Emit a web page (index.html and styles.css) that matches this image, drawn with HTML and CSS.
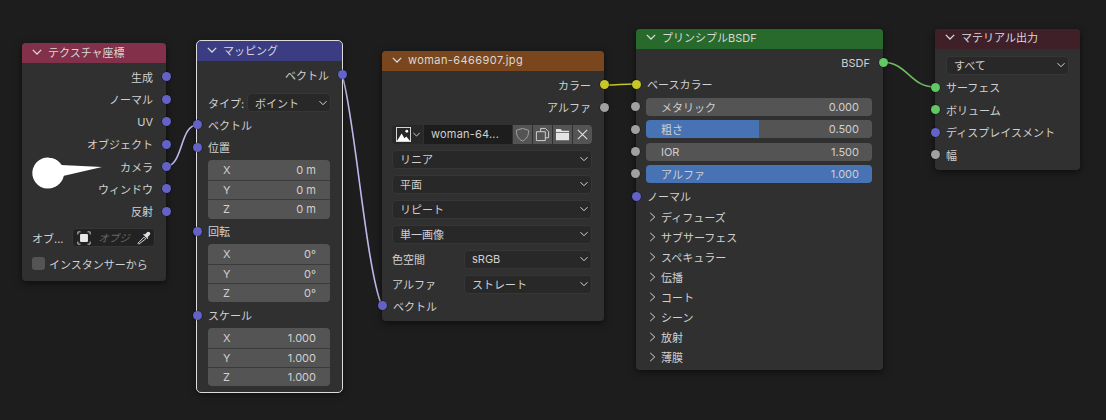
FILE: index.html
```html
<!DOCTYPE html>
<html lang="ja">
<head>
<meta charset="utf-8">
<title>Nodes</title>
<link rel="stylesheet" href="styles.css">
</head>
<body>
<svg class="defs" width="0" height="0">
  <symbol id="chev" viewBox="0 0 10 10"><path d="M1.500 3.200 5 6.700 8.500 3.200" fill="none" stroke="currentColor" stroke-width="1"/></symbol>
  <symbol id="right" viewBox="0 0 10 12"><path d="M2.500 1.500 7.500 6 2.500 10.500" fill="none" stroke="currentColor" stroke-width="1.100"/></symbol>
</svg>
<main class="canvas">
  <svg class="wires" width="1106" height="420" viewBox="0 0 1106 420">
    <path class="wire" d="M166 166.500C183 166 180 125 197 125"/>
    <path class="wire" d="M342 75C354 110 366 270 382 306"/>
    <path class="wire-y" d="M604 85C620 85 620 84 635 84"/>
    <path class="wire-g" d="M883 62C908 63 910 87 935 87"/>
  </svg>

  <section class="node n1">
    <header class="head h-tex"><svg class="hc"><use href="#chev"/></svg><span>テクスチャ座標</span></header>
    <div class="body">
      <div class="row out">生成<i class="sock out-s blue"></i></div>
      <div class="row out">ノーマル<i class="sock out-s blue"></i></div>
      <div class="row out">UV<i class="sock out-s blue"></i></div>
      <div class="row out">オブジェクト<i class="sock out-s blue"></i></div>
      <div class="row out">カメラ<i class="sock out-s blue"></i></div>
      <div class="row out">ウィンドウ<i class="sock out-s blue"></i></div>
      <div class="row out">反射<i class="sock out-s blue"></i></div>
      <div class="objrow">
        <span class="objlabel">オブ...</span>
        <div class="objfield">
          <svg class="objicon" viewBox="0 0 16 16"><path d="M1 4V1h3M12 1h3v3M15 12v3h-3M4 15H1v-3" fill="none" stroke="#d8d8d8" stroke-width="1"/><rect x="3.500" y="3.500" width="9" height="9" rx="1" fill="#e8e8e8"/></svg>
          <span class="objph">オブジ</span>
          <svg class="objicon" viewBox="0 0 16 16"><path d="M2 15l-1-1 7-7 2 2z" fill="none" stroke="#d8d8d8" stroke-width="1.100"/><path d="M7 4l5 5 1-1-1-1 2.500-2.500a1.800 1.800 0 0 0-3-3L9 4 8 3z" fill="#e0e0e0"/></svg>
        </div>
      </div>
      <div class="checkrow"><i class="check"></i>インスタンサーから</div>
    </div>
  </section>
  <svg class="comet" width="1106" height="420" viewBox="0 0 1106 420">
    <path d="M61 165L102 167 63 176a15.500 15.500 0 1 1-2-11z" fill="#fff"/>
    <circle cx="49" cy="173" r="15" fill="#fff"/>
  </svg>

  <section class="node n2">
    <header class="head h-map"><svg class="hc"><use href="#chev"/></svg><span>マッピング</span></header>
    <div class="body">
      <div class="row out">ベクトル<i class="sock out-s blue"></i></div>
      <div class="proprow type"><span class="plabel">タイプ:</span><div class="select"><span>ボイント</span><svg class="sc"><use href="#chev"/></svg></div></div>
      <div class="row in"><i class="sock in-s blue"></i>ベクトル</div>
      <div class="row in"><i class="sock in-s blue"></i>位置</div>
      <div class="vec">
        <div class="vrow"><span>X</span><span>0 m</span></div>
        <div class="vrow"><span>Y</span><span>0 m</span></div>
        <div class="vrow"><span>Z</span><span>0 m</span></div>
      </div>
      <div class="row in"><i class="sock in-s blue"></i>回転</div>
      <div class="vec">
        <div class="vrow"><span>X</span><span>0°</span></div>
        <div class="vrow"><span>Y</span><span>0°</span></div>
        <div class="vrow"><span>Z</span><span>0°</span></div>
      </div>
      <div class="row in"><i class="sock in-s blue"></i>スケール</div>
      <div class="vec">
        <div class="vrow"><span>X</span><span>1.000</span></div>
        <div class="vrow"><span>Y</span><span>1.000</span></div>
        <div class="vrow"><span>Z</span><span>1.000</span></div>
      </div>
    </div>
  </section>

  <section class="node n3">
    <header class="head h-img"><svg class="hc"><use href="#chev"/></svg><span class="latin">woman-6466907.jpg</span></header>
    <div class="body">
      <div class="row out">カラー<i class="sock out-s yellow"></i></div>
      <div class="row out">アルファ<i class="sock out-s gray"></i></div>
      <div class="imgrow">
        <div class="imgpick">
          <svg class="ico" viewBox="0 0 16 16"><rect x=".5" y=".5" width="15" height="15" fill="none" stroke="#e0e0e0"/><path d="M1 15l5-8 3 5 2-2 4 5z" fill="#fff"/><circle cx="11.500" cy="4.500" r="1.500" fill="#fff"/></svg>
          <svg class="mini"><use href="#chev"/></svg>
        </div>
        <div class="imgname">woman-64...</div>
        <div class="imgbtn"><svg class="ico" viewBox="0 0 16 16"><path d="M8 1.500 14.500 3.500C14.500 9 13 12.500 8 15 3 12.500 1.500 9 1.500 3.500z" fill="none" stroke="#a8a8a8"/></svg></div>
        <div class="imgbtn"><svg class="ico" viewBox="0 0 16 16"><path d="M6 1.500h5l3.500 3.500v6.500H11M6 1.500V5H1.500v9.500H11V5H6" fill="none" stroke="#d8d8d8"/></svg></div>
        <div class="imgbtn"><svg class="ico" viewBox="0 0 16 16"><path d="M1 2h5l1.500 2H15v1.500H1z" fill="#e4e4e4"/><path d="M1 6.500h14V14H1z" fill="#e4e4e4"/></svg></div>
        <div class="imgbtn"><svg class="ico" viewBox="0 0 16 16"><path d="M3 3l10 10M13 3 3 13" stroke="#e0e0e0" stroke-width="1.200"/></svg></div>
      </div>
      <div class="fullsel">
        <div class="select"><span>リニア</span><svg class="sc"><use href="#chev"/></svg></div>
      </div>
      <div class="fullsel"><div class="select"><span>平面</span><svg class="sc"><use href="#chev"/></svg></div></div>
      <div class="fullsel"><div class="select"><span>リピート</span><svg class="sc"><use href="#chev"/></svg></div></div>
      <div class="fullsel"><div class="select"><span>単一画像</span><svg class="sc"><use href="#chev"/></svg></div></div>
      <div class="proprow wide"><span class="plabel">色空間</span><div class="select"><span>sRGB</span><svg class="sc"><use href="#chev"/></svg></div></div>
      <div class="proprow wide"><span class="plabel">アルファ</span><div class="select"><span>ストレート</span><svg class="sc"><use href="#chev"/></svg></div></div>
      <div class="row in"><i class="sock in-s blue"></i>ベクトル</div>
    </div>
  </section>

  <section class="node n4">
    <header class="head h-sh"><svg class="hc"><use href="#chev"/></svg><span>プリンシプルBSDF</span></header>
    <div class="body">
      <div class="row out">BSDF<i class="sock out-s green"></i></div>
      <div class="row in"><i class="sock in-s yellow"></i>ベースカラー</div>
      <div class="slider"><i class="sock sl-s gray"></i><span>メタリック</span><span>0.000</span></div>
      <div class="slider half"><i class="sock sl-s gray"></i><span>粗さ</span><span>0.500</span></div>
      <div class="slider"><i class="sock sl-s gray"></i><span>IOR</span><span>1.500</span></div>
      <div class="slider full"><i class="sock sl-s gray"></i><span>アルファ</span><span>1.000</span></div>
      <div class="row in"><i class="sock in-s blue"></i>ノーマル</div>
      <div class="panel"><svg class="pc"><use href="#right"/></svg>ディフューズ</div>
      <div class="panel"><svg class="pc"><use href="#right"/></svg>サブサーフェス</div>
      <div class="panel"><svg class="pc"><use href="#right"/></svg>スペキュラー</div>
      <div class="panel"><svg class="pc"><use href="#right"/></svg>伝播</div>
      <div class="panel"><svg class="pc"><use href="#right"/></svg>コート</div>
      <div class="panel"><svg class="pc"><use href="#right"/></svg>シーン</div>
      <div class="panel"><svg class="pc"><use href="#right"/></svg>放射</div>
      <div class="panel"><svg class="pc"><use href="#right"/></svg>薄膜</div>
    </div>
  </section>

  <section class="node n5">
    <header class="head h-out"><svg class="hc"><use href="#chev"/></svg><span>マテリアル出力</span></header>
    <div class="body">
      <div class="fullsel first"><div class="select"><span>すべて</span><svg class="sc"><use href="#chev"/></svg></div></div>
      <div class="row in"><i class="sock in-s green"></i>サーフェス</div>
      <div class="row in"><i class="sock in-s green"></i>ボリューム</div>
      <div class="row in"><i class="sock in-s blue"></i>ディスプレイスメント</div>
      <div class="row in"><i class="sock in-s gray"></i>幅</div>
    </div>
  </section>
</main>
</body>
</html>
```
FILE: styles.css
```css
* { box-sizing: border-box; }
html, body { margin: 0; padding: 0; }
body {
  background: #1d1d1d;
  width: 1106px;
  height: 420px;
  overflow: hidden;
  font-family: Inter, "Noto Sans CJK JP", sans-serif;
  font-size: 11px;
  color: #d0d0d0;
}
.defs { position: absolute; }
.canvas { position: relative; width: 1106px; height: 420px; overflow: hidden; }
.wires, .comet { position: absolute; left: 0; top: 0; pointer-events: none; }
.comet { z-index: 5; }
.wire, .wire-y, .wire-g { fill: none; stroke-width: 1.6; }
.wire { stroke: #bdb8ea; }
.wire-y { stroke: #c4c42c; }
.wire-g { stroke: #6cbe5c; }

.node {
  position: absolute;
  background: #303030;
  border-radius: 4px;
  box-shadow: 0 2px 7px rgba(0,0,0,.55);
}
.n1 { left: 22px; top: 43px; width: 144px; height: 238px; }
.n2 { left: 197px; top: 41px; width: 145px; height: 351px; outline: 1px solid #dcdcdc; }
.n3 { left: 382px; top: 51px; width: 222px; height: 270px; }
.n4 { left: 636px; top: 29px; width: 247px; height: 341px; }
.n5 { left: 935px; top: 29px; width: 145px; height: 141px; }

.head {
  height: 20px;
  display: flex;
  align-items: center;
  padding: 0 0 3px 9px;
  border-radius: 4px 4px 0 0;
  color: #d8d8d8;
}
.n4 .head, .n5 .head { padding-bottom: 5px; }
.hc { width: 12px; height: 12px; margin-right: 5px; color: #dcdcdc; }
.latin { letter-spacing: .42px; }
.h-tex { background: #83314a; }
.h-map { background: #3c3c83; }
.h-img { background: #79461d; }
.h-sh { background: #28692c; }
.h-out { background: #3f2028; }

.body { padding-top: 2.800px; display: flex; flex-direction: column; position: relative; }

.row { height: 22.400px; display: flex; align-items: center; position: relative; white-space: nowrap; flex: none; }
.row.out { justify-content: flex-end; padding-right: 13px; }
.row.in { padding-left: 11px; }
.row.out + .row.in { margin-top: -1px; }
.wide + .row.in { margin-top: 1px; }

.sock {
  position: absolute;
  width: 9px;
  height: 9px;
  border-radius: 50%;
  top: 50%;
  margin-top: -4.500px;
  box-shadow: 0 0 0 .5px rgba(0,0,0,.5);
  z-index: 3;
}
.out-s { right: -4.500px; }
.in-s { left: -4.500px; }
.sl-s { left: -15px; }
.blue { background: #6363c7; }
.yellow { background: #c7c729; }
.gray { background: #a1a1a1; }
.green { background: #63c763; }

.objrow { display: flex; align-items: center; height: 20px; margin: 5px 11px 0 10px; gap: 9px; }
.objlabel { flex: none; width: 31px; white-space: nowrap; }
.objfield {
  flex: 1;
  height: 19px;
  background: #222;
  border: 1px solid #363636;
  border-radius: 4px;
  display: flex;
  align-items: center;
  padding: 0 3px 0 4px;
  justify-content: space-between;
}
.objicon { width: 14px; height: 14px; flex: none; }
.objph { color: #686868; font-style: italic; font-size: 10.500px; }
.checkrow { display: flex; align-items: center; gap: 4px; margin: 6px 0 0 10px; height: 20px; }
.check { width: 13px; height: 13px; background: #545454; border-radius: 3px; }

.proprow { display: flex; align-items: center; padding: 0 11px; }
.proprow.type { height: 22px; margin-top: 5.400px; }
.plabel { flex: none; white-space: nowrap; }
.type .plabel { width: 39px; }

.select {
  height: 19px;
  flex: 1;
  background: #282828;
  border: 1px solid #363636;
  border-radius: 4px;
  display: flex;
  align-items: center;
  justify-content: space-between;
  padding: 0 2px 0 7px;
}
.sc { width: 10px; height: 10px; color: #d8d8d8; flex: none; }

.vec { margin: 2px 12px 1.400px 11px; background: #545454; border-radius: 4px; overflow: hidden; flex: none; }
.vrow {
  height: 19.400px;
  display: flex;
  align-items: center;
  justify-content: space-between;
  padding: 0 14px 0 15px;
  border-top: 1px solid #3a3a3a;
}
.vrow:first-child { border-top: 0; }

.imgrow { display: flex; height: 19px; margin: 6px 12px 0 10px; border-radius: 4px; overflow: hidden; flex: none; }
.imgpick { width: 31px; background: #282828; display: flex; align-items: center; padding-left: 4px; gap: 1px; margin-right: 1px; }
.ico { width: 15px; height: 15px; flex: none; }
.mini { width: 9px; height: 9px; color: #ddd; }
.imgname { width: 88px; background: #1d1d1d; display: flex; align-items: center; padding-left: 7px; white-space: nowrap; letter-spacing: .2px; }
.imgbtn { flex: 1; background: #545454; display: flex; align-items: center; justify-content: center; margin-left: 1px; }

.fullsel { display: flex; padding: 0 12px 0 10px; margin-top: 6px; flex: none; }
.proprow.wide { height: 19px; margin-top: 6px; padding: 0 12px 0 10px; flex: none; }
.wide .plabel { width: 72px; }

.fullsel.first { margin-top: 4px; padding: 0 11px 0 11px; margin-bottom: 1.500px; }

.slider {
  position: relative;
  height: 18px;
  margin: 2.200px 11px 2.200px 10px;
  background: #545454;
  border-radius: 4px;
  display: flex;
  align-items: center;
  justify-content: space-between;
  padding: 0 13px 0 15px;
  flex: none;
}
.half { background: linear-gradient(90deg, #4772b3 50%, #545454 50%); }
.full { background: #4772b3; }
.panel {
  height: 19.900px;
  display: flex;
  align-items: center;
  padding-left: 12px;
  white-space: nowrap;
  flex: none;
}
.pc { width: 9px; height: 12px; margin-right: 4px; color: #d8d8d8; }
```
